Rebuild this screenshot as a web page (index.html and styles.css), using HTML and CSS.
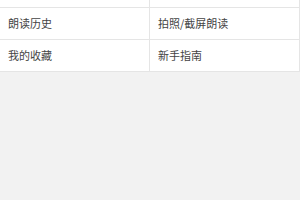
FILE: index.html
```html
<!DOCTYPE html>
<html lang="zh-CN">
<head>
<meta charset="UTF-8" />
<meta name="viewport" content="width=device-width, initial-scale=1" />
<title>我的</title>
<link rel="stylesheet" href="styles.css">
</head>
<body>
  <!-- Menu grid, scrolled so only the bottom of the first row shows -->
  <div class="menu">
    <a class="cell" href="#"></a>
    <a class="cell" href="#"></a>
    <a class="cell" href="#">朗读历史</a>
    <a class="cell" href="#">拍照/截屏朗读</a>
    <a class="cell" href="#">我的收藏</a>
    <a class="cell" href="#">新手指南</a>
  </div>
</body>
</html>
```

FILE: styles.css
```css
/* Page */
body {
  margin: 0;
  background-color: #f2f2f2;
  font-family: "Noto Sans CJK SC", "Noto Sans", sans-serif;
}

/* Two column menu grid */
.menu {
  display: grid;
  grid-template-columns: 1fr 1fr;
  width: 300px;
  margin-top: -24px;
  background-color: #fff;
}

.cell {
  display: block;
  height: 31px;
  line-height: 31px;
  padding: 0 8px;
  font-size: 11px;
  color: #444;
  text-decoration: none;
  border-right: 1px solid #e5e5e5;
  border-bottom: 1px solid #e5e5e5;
  white-space: nowrap;
}
```
